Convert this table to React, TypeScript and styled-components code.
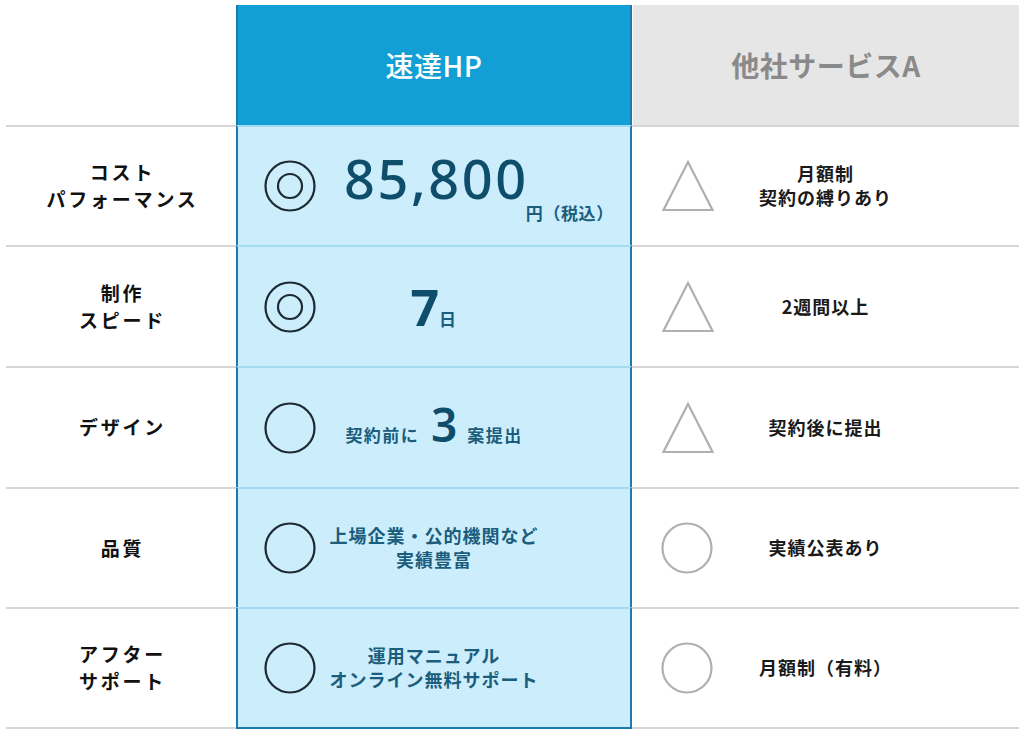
import React from "react";
import styled, { createGlobalStyle, css } from "styled-components";

const GlobalStyle = createGlobalStyle`
  html, body {
    margin: 0;
    padding: 0;
    background: #ffffff;
  }
  body {
    font-family: "Noto Sans CJK JP", "Noto Sans", sans-serif;
    color: #1a1a1a;
  }
`;

const COLORS = {
  blue: "#119fd5",
  blueBorder: "#1b7aa8",
  paleBlue: "#ccedfb",
  paleLine: "#a3dbf2",
  grayLine: "#d6d6d6",
  grayHead: "#e6e6e6",
  grayText: "#8a8a8a",
  teal: "#1b5d7c",
  deepTeal: "#0f4e6b",
  ink: "#1c2a33",
  icon: "#b0b0b0",
};

type Kind = "label" | "ours" | "theirs";

const Page = styled.div`
  padding: 5px 5px 0 6px;
`;

const Table = styled.div`
  display: grid;
  grid-template-columns: 230px 396px 387px;
  grid-template-rows: 120px 120px 121px 121px 120px 122px;
`;

const HeadCell = styled.div<{ $kind: Kind }>`
  display: flex;
  align-items: center;
  justify-content: center;
  font-size: 28px;
  letter-spacing: 0.5px;
  ${({ $kind }) =>
    $kind === "ours"
      ? css`
          background: ${COLORS.blue};
          color: #ffffff;
          font-weight: 500;
          border-left: 2px solid ${COLORS.blueBorder};
          border-right: 2px solid ${COLORS.blueBorder};
        `
      : $kind === "theirs"
      ? css`
          background: ${COLORS.grayHead};
          color: ${COLORS.grayText};
          font-weight: 700;
          margin-left: 1px;
        `
      : css`
          background: transparent;
        `}
`;

const Cell = styled.div<{ $kind: Kind; $last?: boolean }>`
  box-sizing: border-box;
  display: grid;
  grid-template-areas: "stack";
  align-items: center;
  border-top: 2px solid
    ${({ $kind }) => ($kind === "ours" ? COLORS.paleLine : COLORS.grayLine)};
  ${({ $last, $kind }) =>
    $last &&
    css`
      border-bottom: 2px solid
        ${$kind === "ours" ? COLORS.blueBorder : COLORS.grayLine};
    `}
  ${({ $kind }) =>
    $kind === "ours" &&
    css`
      background: ${COLORS.paleBlue};
      border-left: 2px solid ${COLORS.blueBorder};
      border-right: 2px solid ${COLORS.blueBorder};
      color: ${COLORS.teal};
    `}
`;

const Label = styled.div`
  grid-area: stack;
  justify-self: center;
  text-align: center;
  font-size: 19px;
  font-weight: 700;
  line-height: 27px;
  letter-spacing: 2.8px;
  color: #111111;
  padding-left: 3px;
  padding-bottom: 2px;
`;

const IconSlot = styled.div<{ $inset: number }>`
  grid-area: stack;
  justify-self: start;
  display: flex;
  margin-left: ${({ $inset }) => $inset}px;
`;

const Text = styled.div<{ $tone: "ours" | "theirs" }>`
  grid-area: stack;
  justify-self: center;
  text-align: center;
  font-size: 18px;
  line-height: 24px;
  letter-spacing: 1px;
  padding-bottom: 2px;
  font-weight: ${({ $tone }) => ($tone === "ours" ? 600 : 700)};
  color: ${({ $tone }) => ($tone === "ours" ? COLORS.teal : "#1a1a1a")};
`;

const PriceBlock = styled.div`
  grid-area: stack;
  justify-self: start;
  margin-left: 106px;
  display: flex;
  align-items: flex-end;
  padding-top: 2px;
`;

const BigNumber = styled.span<{ $size: number; $weight: number }>`
  font-family: "Noto Sans", "Noto Sans CJK JP", sans-serif;
  font-size: ${({ $size }) => $size}px;
  font-weight: ${({ $weight }) => $weight};
  line-height: 1;
  color: ${COLORS.deepTeal};
`;

const PriceNumber = styled(BigNumber)`
  letter-spacing: 2.6px;
  margin-bottom: 18px;
`;

const Unit = styled.span`
  font-size: 17px;
  font-weight: 600;
  letter-spacing: 0.6px;
  line-height: 20px;
  color: ${COLORS.teal};
  margin-left: -3px;
`;

const InlineRow = styled.div<{ $lift?: number }>`
  grid-area: stack;
  justify-self: center;
  display: flex;
  align-items: baseline;
  color: ${COLORS.teal};
  padding-bottom: ${({ $lift }) => $lift ?? 0}px;
`;

const SmallWord = styled.span`
  font-size: 17px;
  font-weight: 600;
  letter-spacing: 1.4px;
`;

const Spaced = styled(BigNumber)`
  margin: 0 10px 0 12px;
`;

type IconProps = { color: string };

const DoubleCircle = ({ color }: IconProps) => (
  <svg width="52" height="52" viewBox="0 0 52 52" fill="none">
    <circle cx="26" cy="26" r="24.5" stroke={color} strokeWidth="2.2" />
    <circle cx="26" cy="26" r="12" stroke={color} strokeWidth="2.2" />
  </svg>
);

const RingIcon = ({ color }: IconProps) => (
  <svg width="52" height="52" viewBox="0 0 52 52" fill="none">
    <circle cx="26" cy="26" r="24.5" stroke={color} strokeWidth="2.2" />
  </svg>
);

const TriangleIcon = ({ color }: IconProps) => (
  <svg width="54" height="52" viewBox="0 0 54 52" fill="none">
    <path d="M27 2 L2.5 50 L51.5 50 Z" stroke={color} strokeWidth="2.2" strokeLinejoin="miter" />
  </svg>
);

type Mark = "double" | "ring" | "triangle";

const MarkIcon = ({ mark, color }: { mark: Mark; color: string }) =>
  mark === "double" ? (
    <DoubleCircle color={color} />
  ) : mark === "ring" ? (
    <RingIcon color={color} />
  ) : (
    <TriangleIcon color={color} />
  );

type Row = {
  label: React.ReactNode;
  ourMark: Mark;
  ours: React.ReactNode;
  theirMark: Mark;
  theirs: React.ReactNode;
};

const rows: Row[] = [
  {
    label: (
      <>
        コスト
        <br />
        パフォーマンス
      </>
    ),
    ourMark: "double",
    ours: (
      <PriceBlock>
        <PriceNumber $size={54} $weight={500}>
          85,800
        </PriceNumber>
        <Unit>円（税込）</Unit>
      </PriceBlock>
    ),
    theirMark: "triangle",
    theirs: (
      <Text $tone="theirs">
        月額制
        <br />
        契約の縛りあり
      </Text>
    ),
  },
  {
    label: (
      <>
        制作
        <br />
        スピード
      </>
    ),
    ourMark: "double",
    ours: (
      <InlineRow>
        <BigNumber $size={50} $weight={700}>
          7
        </BigNumber>
        <SmallWord>日</SmallWord>
      </InlineRow>
    ),
    theirMark: "triangle",
    theirs: <Text $tone="theirs">2週間以上</Text>,
  },
  {
    label: <>デザイン</>,
    ourMark: "ring",
    ours: (
      <InlineRow $lift={8}>
        <SmallWord>契約前に</SmallWord>
        <Spaced $size={46} $weight={600}>
          3
        </Spaced>
        <SmallWord>案提出</SmallWord>
      </InlineRow>
    ),
    theirMark: "triangle",
    theirs: <Text $tone="theirs">契約後に提出</Text>,
  },
  {
    label: <>品質</>,
    ourMark: "ring",
    ours: (
      <Text $tone="ours">
        上場企業・公的機関など
        <br />
        実績豊富
      </Text>
    ),
    theirMark: "ring",
    theirs: <Text $tone="theirs">実績公表あり</Text>,
  },
  {
    label: (
      <>
        アフター
        <br />
        サポート
      </>
    ),
    ourMark: "ring",
    ours: (
      <Text $tone="ours">
        運用マニュアル
        <br />
        オンライン無料サポート
      </Text>
    ),
    theirMark: "ring",
    theirs: <Text $tone="theirs">月額制（有料）</Text>,
  },
];

export default function App() {
  return (
    <>
      <GlobalStyle />
      <Page>
        <Table>
          <HeadCell $kind="label" />
          <HeadCell $kind="ours">速達HP</HeadCell>
          <HeadCell $kind="theirs">他社サービスA</HeadCell>
          {rows.map((row, i) => {
            const last = i === rows.length - 1;
            return (
              <React.Fragment key={i}>
                <Cell $kind="label" $last={last}>
                  <Label>{row.label}</Label>
                </Cell>
                <Cell $kind="ours" $last={last}>
                  <IconSlot $inset={26}>
                    <MarkIcon mark={row.ourMark} color={COLORS.ink} />
                  </IconSlot>
                  {row.ours}
                </Cell>
                <Cell $kind="theirs" $last={last}>
                  <IconSlot $inset={29}>
                    <MarkIcon mark={row.theirMark} color={COLORS.icon} />
                  </IconSlot>
                  {row.theirs}
                </Cell>
              </React.Fragment>
            );
          })}
        </Table>
      </Page>
    </>
  );
}
